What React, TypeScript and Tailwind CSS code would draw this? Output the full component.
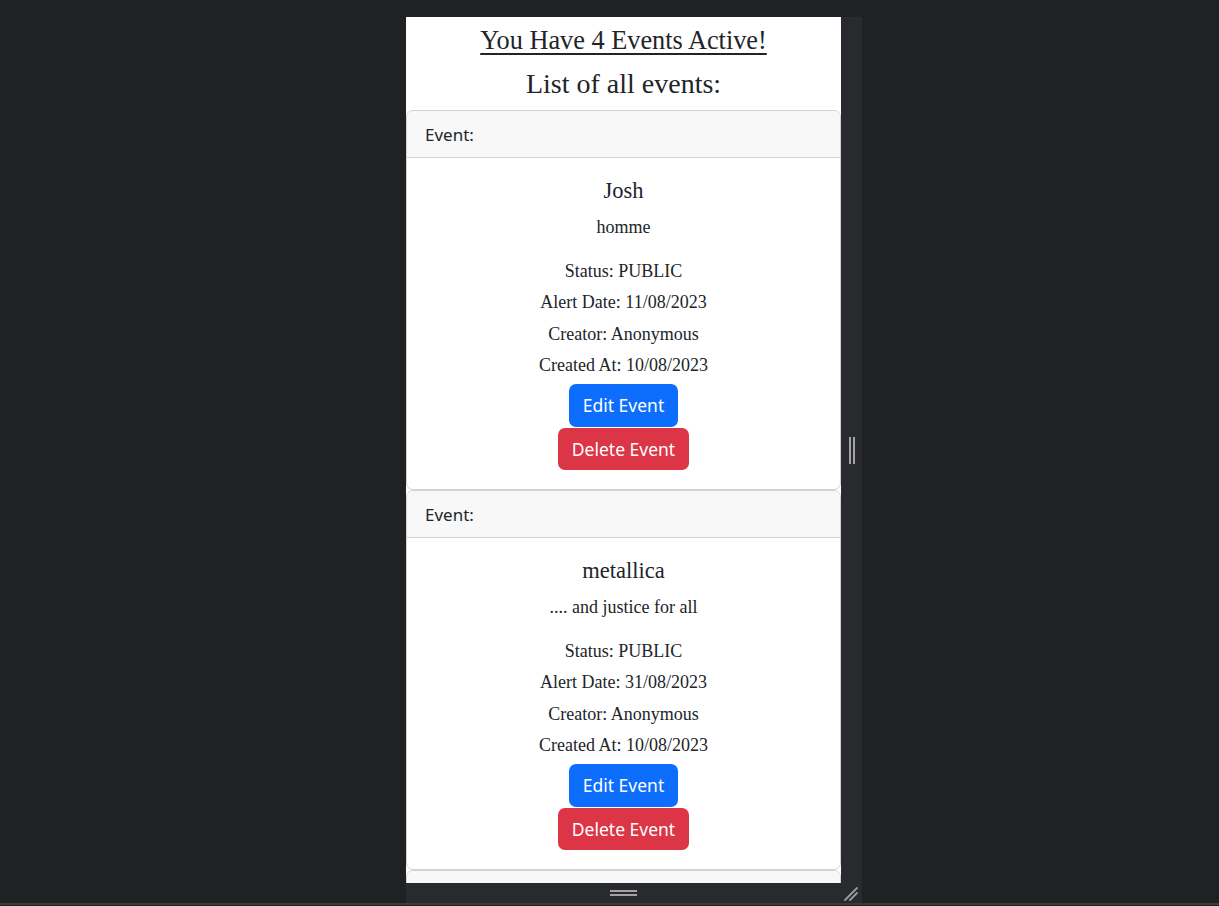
import React from 'react'

type EventItem = {
    title: string
    description: string
    status: string
    alertDate: string
    creator: string
    createdAt: string
}

const EVENTS: EventItem[] = [
    {
        title: 'Josh',
        description: 'homme',
        status: 'PUBLIC',
        alertDate: '11/08/2023',
        creator: 'Anonymous',
        createdAt: '10/08/2023',
    },
    {
        title: 'metallica',
        description: '.... and justice for all',
        status: 'PUBLIC',
        alertDate: '31/08/2023',
        creator: 'Anonymous',
        createdAt: '10/08/2023',
    },
    {
        title: 'Event',
        description: '',
        status: 'PUBLIC',
        alertDate: '',
        creator: 'Anonymous',
        createdAt: '',
    },
]

const serif = "font-['Liberation_Serif','Times_New_Roman',serif]"
const sans = "font-['Noto_Sans','Open_Sans',sans-serif]"

function EventCard({ event }: { event: EventItem }) {
    return (
        <div className="shrink-0 overflow-hidden rounded-[7px] border border-[#d2d2d2] bg-white">
            <div className={`flex h-[47px] items-center border-b border-[#d2d2d2] bg-[#f8f8f8] pt-[2px] pl-[18px] text-[17px] text-[#212529] ${sans}`}>
                Event:
            </div>
            <div className={`flex flex-col items-center px-[18px] pt-[19px] pb-[19px] text-[#212529] ${serif}`}>
                <h5 className="mb-[10px] h-[27px] text-[22.5px] leading-[27px]">{event.title}</h5>
                <p className="mb-[17px] h-[27px] text-[18px] leading-[27px]">{event.description}</p>
                <div className="flex flex-col items-center text-[18px] leading-[27px]">
                    <p>Status: {event.status}</p>
                    <p className="mt-[4px]">Alert Date: {event.alertDate}</p>
                    <p className="mt-[5px]">Creator: {event.creator}</p>
                    <p className="mt-[4px]">Created At: {event.createdAt}</p>
                </div>
                <div className={`mt-[5px] flex flex-col items-center gap-[1px] text-[17.5px] text-white ${sans}`}>
                    <button className="flex h-[43px] w-[109px] items-center justify-center rounded-[7px] bg-[#0d6efd]">
                        Edit Event
                    </button>
                    <button className="flex h-[42px] w-[131px] items-center justify-center rounded-[7px] bg-[#dc3545]">
                        Delete Event
                    </button>
                </div>
            </div>
        </div>
    )
}

export default function App() {
    return (
        <div className="flex h-[906px] w-full flex-col overflow-hidden bg-[#202123]">
            <div className="h-[17px] shrink-0" />
            <div className="flex shrink-0 pl-[406px]">
                <div className="flex flex-col">
                    <div className="flex">
                        {/* device viewport */}
                        <div className="h-[866px] w-[435px] overflow-hidden bg-white">
                            <div className={`flex flex-col items-center pt-[8px] text-[#212529] ${serif}`}>
                                <h3 className="h-[31px] text-[26.3px] leading-[31px] underline decoration-[1.5px] underline-offset-[4px]">
                                    You Have 4 Events Active!
                                </h3>
                                <h2 className="mt-[11px] mb-[9px] h-[34px] text-[28px] leading-[34px]">List of all events:</h2>
                            </div>
                            <div className="flex flex-col">
                                {EVENTS.map((event, i) => (
                                    <EventCard key={i} event={event} />
                                ))}
                            </div>
                        </div>
                        {/* side resize strip */}
                        <div className="flex h-[866px] w-[21px] items-center justify-center bg-[#292a2e]">
                            <div className="flex gap-[2px]">
                                <div className="h-[27px] w-[2px] bg-[#a3a3a3]" />
                                <div className="h-[27px] w-[2px] bg-[#a3a3a3]" />
                            </div>
                        </div>
                    </div>
                    {/* bottom resize strip */}
                    <div className="relative flex h-[20px] w-[456px] items-center justify-center bg-[#292a2e]">
                        <div className="mr-[21px] flex flex-col gap-[2px]">
                            <div className="h-[2px] w-[27px] bg-[#a3a3a3]" />
                            <div className="h-[2px] w-[27px] bg-[#a3a3a3]" />
                        </div>
                        <svg className="absolute right-[4px] bottom-[2px]" width="14" height="14" viewBox="0 0 14 14">
                            <path d="M1 13 L13 1 M6 13 L13 6" stroke="#9a9a9a" strokeWidth="1.8" strokeLinecap="round" />
                        </svg>
                    </div>
                </div>
            </div>
            <div className="h-[2px] w-full shrink-0 bg-[#3a3b3d]" />
        </div>
    )
}
